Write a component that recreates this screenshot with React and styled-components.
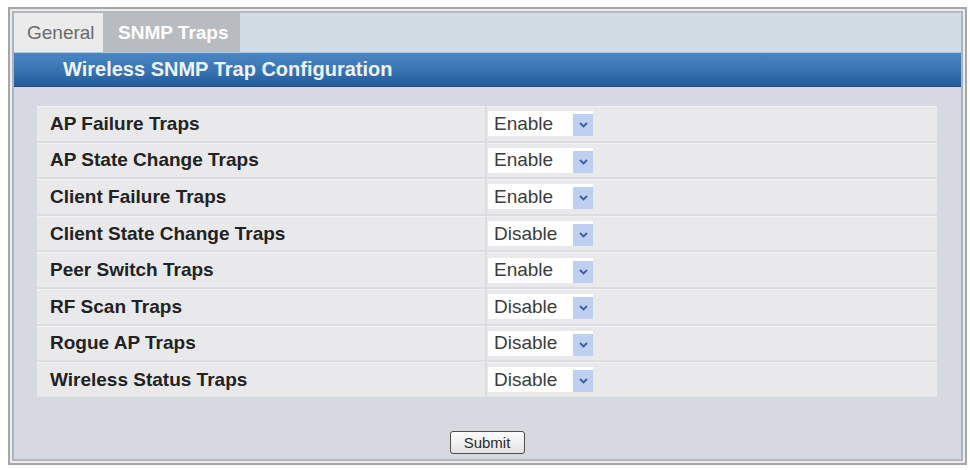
import React, { useState } from "react";
import styled, { createGlobalStyle } from "styled-components";

const GlobalStyle = createGlobalStyle`
  html, body {
    margin: 0;
    padding: 0;
    background: #ffffff;
    font-family: "Liberation Sans", Arial, sans-serif;
  }
`;

const Page = styled.div`
  padding: 7px 0 0 8px;
  width: 970px;
  height: 470px;
  box-sizing: border-box;
`;

const Frame = styled.div`
  width: 959px;
  box-sizing: border-box;
  border: 2px solid #a6a6a6;
  padding: 2px;
  background: #ececec;
`;

const Inner = styled.div`
  border-top: 2px solid #b4b8bc;
  border-left: 2px solid #aab4bf;
  border-right: 2px solid #aab4bf;
  border-bottom: 2px solid #b4b8bc;
  display: flex;
  flex-direction: column;
`;

const TabStrip = styled.div`
  display: flex;
  height: 39px;
  background: #d2dce5;
`;

const Tab = styled.div`
  display: flex;
  align-items: center;
  box-sizing: border-box;
  width: ${(p) => p.$width}px;
  padding-left: ${(p) => p.$pad}px;
  font-size: 19px;
  cursor: pointer;
  background: ${(p) => (p.$active ? "#b8bcc0" : "#ebebeb")};
  color: ${(p) => (p.$active ? "#ffffff" : "#6a6a6a")};
  font-weight: ${(p) => (p.$active ? "bold" : "normal")};
`;

const TitleBar = styled.div`
  height: 35px;
  box-sizing: border-box;
  display: flex;
  align-items: center;
  padding-left: 49px;
  border-top: 1px solid #a9cbe9;
  background: linear-gradient(#4b87c4, #3873b2 55%, #235a9b);
  border-bottom: 1px solid #1d4d88;
  color: #eef4fb;
  font-size: 20px;
  font-weight: bold;
`;

const Body = styled.div`
  background: #d6dae0;
  padding: 19px 24px 5px 23px;
  display: flex;
  flex-direction: column;
  align-items: center;
`;

const TrapTable = styled.div`
  width: 100%;
  display: grid;
  grid-template-columns: 448px 1fr;
  grid-auto-rows: 34.6px;
  gap: 2px;
  background: #dcdde0;
`;

const LabelCell = styled.div`
  display: flex;
  align-items: center;
  padding-left: 13px;
  background: #e9e9eb;
  border-top: 1px solid #f2f2f3;
  font-size: 19px;
  font-weight: bold;
  color: #222222;
`;

const ValueCell = styled.div`
  display: flex;
  align-items: center;
  padding-left: 1px;
  background: #e9e9eb;
  border-top: 1px solid #f2f2f3;
`;

const SelectBox = styled.div`
  width: 105px;
  height: 25px;
  box-sizing: border-box;
  display: flex;
  align-items: center;
  justify-content: space-between;
  background: #ffffff;
  padding-left: 6px;
  cursor: pointer;
`;

const SelectText = styled.span`
  font-size: 19px;
  color: #3c3c3c;
`;

const DropButton = styled.span`
  width: 20px;
  height: 22px;
  margin-top: 3px;
  display: flex;
  align-items: center;
  justify-content: center;
  background: #bfcff0;
`;

const SubmitButton = styled.button`
  margin-top: 34px;
  width: 75px;
  height: 23px;
  border: 1px solid #4e4e4e;
  border-radius: 3px;
  background: linear-gradient(#fcfcfc, #e4e4e4);
  font-family: "Liberation Sans", Arial, sans-serif;
  font-size: 15px;
  color: #2a2a2a;
  padding: 0;
  cursor: pointer;
`;

const Chevron = () => (
  <svg width="9" height="6" viewBox="0 0 9 6">
    <path d="M1 1 L4.5 4.5 L8 1" fill="none" stroke="#3a5ea8" strokeWidth="1.8" />
  </svg>
);

const Select = ({ value }) => (
  <SelectBox>
    <SelectText>{value}</SelectText>
    <DropButton>
      <Chevron />
    </DropButton>
  </SelectBox>
);

const traps = [
  ["AP Failure Traps", "Enable"],
  ["AP State Change Traps", "Enable"],
  ["Client Failure Traps", "Enable"],
  ["Client State Change Traps", "Disable"],
  ["Peer Switch Traps", "Enable"],
  ["RF Scan Traps", "Disable"],
  ["Rogue AP Traps", "Disable"],
  ["Wireless Status Traps", "Disable"],
];

const App = () => {
  const [tab, setTab] = useState("snmp");

  return (
    <>
      <GlobalStyle />
      <Page>
        <Frame>
          <Inner>
            <TabStrip>
              <Tab $width={89} $pad={13} $active={tab === "general"} onClick={() => setTab("general")}>
                General
              </Tab>
              <Tab $width={137} $pad={15} $active={tab === "snmp"} onClick={() => setTab("snmp")}>
                SNMP Traps
              </Tab>
            </TabStrip>
            <TitleBar>Wireless SNMP Trap Configuration</TitleBar>
            <Body>
              <TrapTable>
                {traps.map(([label, value]) => (
                  <React.Fragment key={label}>
                    <LabelCell>{label}</LabelCell>
                    <ValueCell>
                      <Select value={value} />
                    </ValueCell>
                  </React.Fragment>
                ))}
              </TrapTable>
              <SubmitButton>Submit</SubmitButton>
            </Body>
          </Inner>
        </Frame>
      </Page>
    </>
  );
};

export default App;
